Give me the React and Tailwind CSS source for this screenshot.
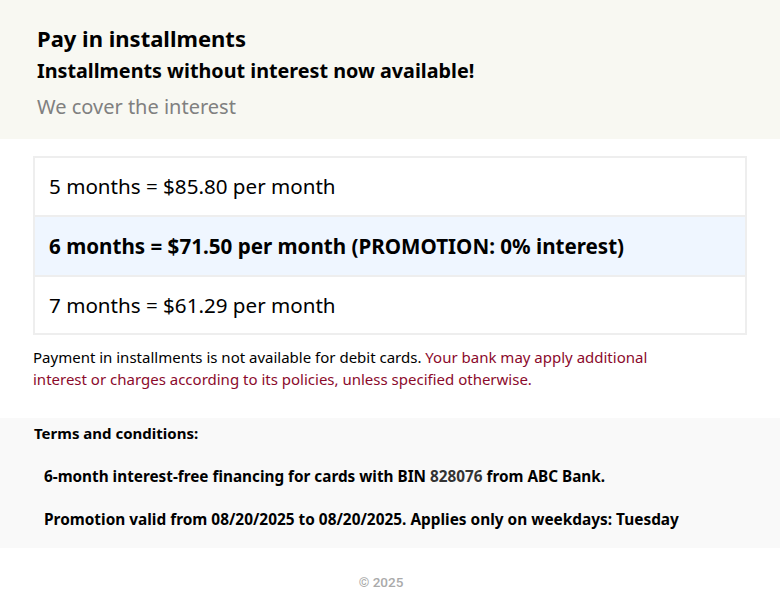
export default function App() {
  const options = [
    { label: '5 months = $85.80 per month' },
    { label: '6 months = $71.50 per month (PROMOTION: 0% interest)', promo: true },
    { label: '7 months = $61.29 per month' },
  ];

  return (
    <div className="min-h-[604px] bg-white text-black" style={{ fontFamily: '"Noto Sans", "Open Sans", sans-serif' }}>
      {/* Header */}
      <header className="bg-[#f8f8f2] px-[37px] pt-[24px] pb-[19px]">
        <h1 className="text-[22px] leading-[29px] font-bold">Pay in installments</h1>
        <h2 className="mt-[5px] text-[19.75px] leading-[25px] font-bold">Installments without interest now available!</h2>
        <p className="mt-[11px] text-[20px] leading-[26px] text-[#808080]">We cover the interest</p>
      </header>

      {/* Options */}
      <section className="px-[33px] pt-[17px]">
        <div className="border-2 border-[#eeeeee]">
          {options.map((option, i) => (
            <div
              key={option.label}
              className={`flex items-center px-[14px] text-[20.6px] ${i === 0 ? 'h-[57px]' : i === 1 ? 'h-[60px] border-t-2 border-[#eeeeee]' : 'h-[58px] border-t-2 border-[#eeeeee]'} ${option.promo ? 'bg-[#eff6ff] font-bold' : ''}`}
            >
              {option.label}
            </div>
          ))}
        </div>
        <p className="mt-[11px] text-[15px] leading-[22px]">
          Payment in installments is not available for debit cards.{' '}
          <span className="text-[#8b0a2c]">
            Your bank may apply additional
            <br />
            interest or charges according to its policies, unless specified otherwise.
          </span>
        </p>
      </section>

      {/* Terms */}
      <section className="mt-[28px] bg-[#f9f9f9] px-[34px] pt-[3px] pb-[16px] font-bold">
        <p className="text-[15px] leading-[24px]">Terms and conditions:</p>
        <p className="mt-[19px] pl-[10px] text-[15.3px] leading-[24px]">
          6-month interest-free financing for cards with BIN <span className="text-[#333]">828076</span> from ABC Bank.
        </p>
        <p className="mt-[20px] pl-[10px] text-[15.4px] leading-[24px]">
          Promotion valid from 08/20/2025 to 08/20/2025. Applies only on weekdays: Tuesday
        </p>
      </section>

      {/* Footer */}
      <footer className="pt-[21px] pb-[12px] pr-[18px] text-center">
        <span className="text-[13.5px] font-medium text-[#aaaaaa]" style={{ fontFamily: 'Roboto, sans-serif' }}>
          © 2025
        </span>
      </footer>
    </div>
  );
}
